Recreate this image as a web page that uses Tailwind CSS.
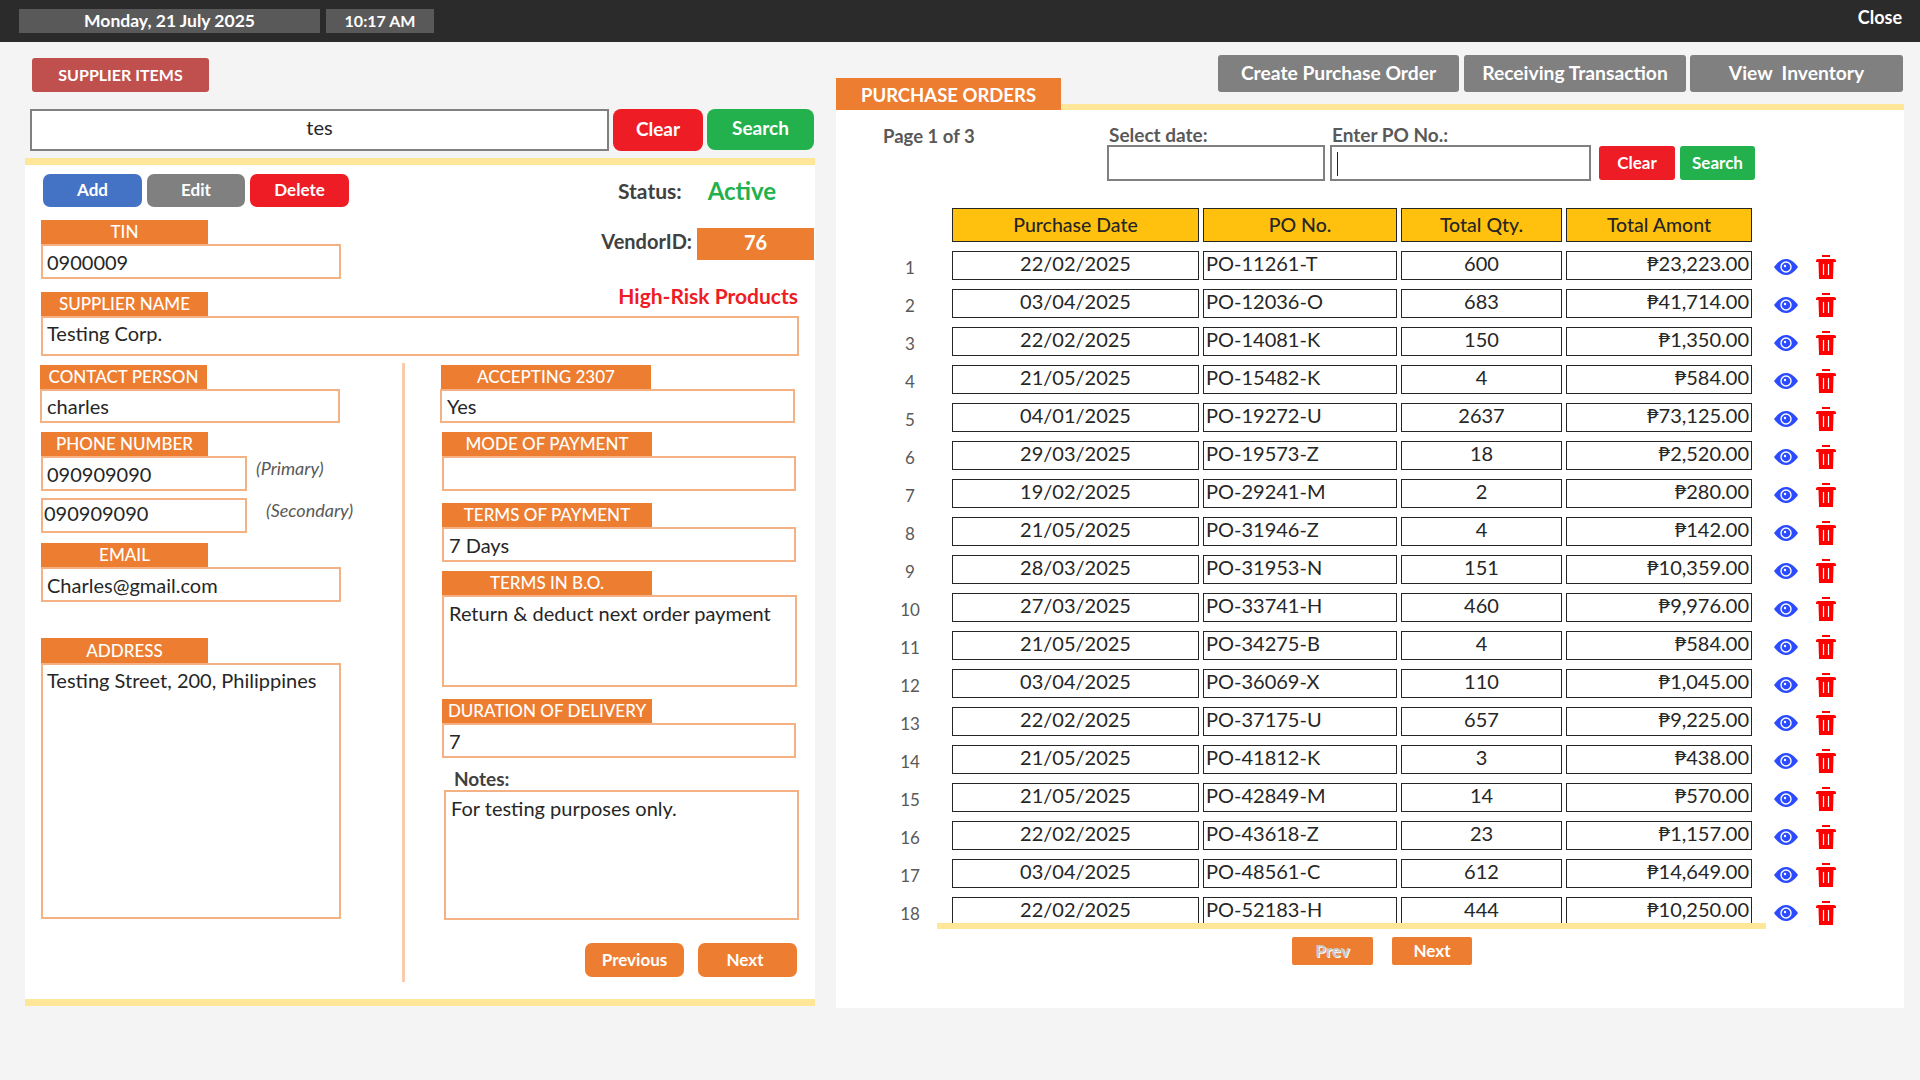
<!DOCTYPE html>
<html lang="en">
<head>
    <meta charset="UTF-8">
    <title>Supplier</title>
    <script src="https://cdn.jsdelivr.net/npm/@tailwindcss/browser@4"></script>
</head>
<body class="w-[1920px] h-[1080px] overflow-hidden bg-[#f4f4f4] font-['Lato',sans-serif] text-[#262626]">

    <!-- Top bar -->
    <div class="h-[42px] bg-[#2b2b2b] flex items-start pl-[19px] relative">
        <div class="mt-[9px] w-[301px] h-[24px] bg-[#595959] text-white text-center text-[17.5px] font-bold leading-[24px]">Monday, 21 July 2025</div>
        <div class="mt-[9px] ml-[6px] w-[108px] h-[24px] bg-[#595959] text-white text-center text-[16px] font-bold leading-[24px]">10:17 AM</div>
        <div class="ml-auto mr-[18px] mt-[6px] text-white text-[18px] font-bold leading-[22px]">Close</div>
    </div>

    <div class="flex items-start">
        <!-- Left side -->
        <div class="ml-[25px] w-[790px]">
            <button class="block mt-[16px] ml-[7px] w-[177px] h-[34px] rounded-[3px] bg-[#c0504d] text-white text-[16px] font-bold">SUPPLIER ITEMS</button>

            <div class="flex mt-[17px] ml-[5px] h-[42px]">
                <input value="tes" class="w-[579px] h-[42px] border-2 border-[#808080] bg-white text-center text-[20px] pb-[6px] outline-none">
                <button class="ml-[4px] w-[90px] h-[42px] rounded-[8px] bg-[#ee1c25] text-white text-[19px] font-bold pb-[2px]">Clear</button>
                <button class="ml-[4px] w-[107px] h-[41px] rounded-[8px] bg-[#22b14c] text-white text-[19px] font-bold pb-[2px]">Search</button>
            </div>

            <div class="mt-[7px] h-[848px] bg-white border-t-[7px] border-b-[7px] border-[#ffe699] pl-[16px]">
                <div class="flex items-start">
                    <div class="w-[310px]">
                        <div class="flex gap-[5px] mt-[9px] ml-[2px]">
                            <button class="w-[99px] h-[33px] rounded-[7px] bg-[#4472c4] text-white text-[17px] font-bold pb-[1px]">Add</button>
                            <button class="w-[98px] h-[33px] rounded-[7px] bg-[#808080] text-white text-[17px] font-bold pb-[1px]">Edit</button>
                            <button class="w-[99px] h-[33px] rounded-[7px] bg-[#ee1c25] text-white text-[17px] font-bold pb-[1px]">Delete</button>
                        </div>
                        <div class="mt-[13px] w-[167px] h-[24px] bg-[#ed7d31] text-white text-center text-[17px] font-medium leading-[24px]">TIN</div>
                        <input value="0900009" class="block w-[300px] h-[35px] border-2 border-[#f4b183] pl-[4px] pr-[5px] text-[20px] outline-none">
                    </div>
                    <div class="ml-[249px] w-[214px]">
                        <div class="flex items-center h-[32px] mt-[10px] pl-[18px]">
                            <span class="text-[21px] font-bold text-[#404040]">Status:</span>
                            <span class="ml-[26px] text-[24px] font-bold text-[#22b14c]">Active</span>
                        </div>
                        <div class="flex items-center mt-[19px]">
                            <span class="w-[97px] text-right pr-[5px] text-[20px] font-bold text-[#404040] whitespace-nowrap pb-[5px]">VendorID:</span>
                            <span class="w-[117px] h-[32px] bg-[#ed7d31] text-white text-center text-[20px] font-bold leading-[28px]">76</span>
                        </div>
                    </div>
                </div>

                <div class="flex items-start justify-between w-[757px] h-[24px] mt-[13px]">
                    <div class="w-[167px] h-[24px] bg-[#ed7d31] text-white text-center text-[17px] font-medium leading-[24px]">SUPPLIER NAME</div>
                    <div class="-mt-[8px] text-[21px] font-bold text-[#ee1c25] leading-[24px]">High-Risk Products</div>
                </div>
                <input value="Testing Corp." class="block w-[758px] h-[40px] border-2 border-[#f4b183] pl-[4px] pr-[5px] pb-[6px] text-[20px] outline-none">

                <div class="flex items-start mt-[7px]">
                    <!-- Left fields -->
                    <div class="w-[361px] pt-[2px]">
                        <div class="-ml-[1px] w-[167px] h-[24px] bg-[#ed7d31] text-white text-center text-[17px] font-medium leading-[24px]">CONTACT PERSON</div>
                        <input value="charles" class="block -ml-[1px] w-[300px] h-[34px] border-2 border-[#f4b183] px-[5px] text-[20px] outline-none">

                        <div class="mt-[9px] w-[167px] h-[24px] bg-[#ed7d31] text-white text-center text-[17px] font-medium leading-[24px]">PHONE NUMBER</div>
                        <div class="flex items-start">
                            <input value="090909090" class="block w-[206px] h-[35px] border-2 border-[#f4b183] pl-[4px] pr-[5px] text-[20px] outline-none">
                            <span class="ml-[9px] -mt-[1px] text-[18px] italic text-[#595959]">(Primary)</span>
                        </div>
                        <div class="flex items-start mt-[7px]">
                            <input value="090909090" class="block w-[206px] h-[35px] border-2 border-[#f4b183] pl-[1px] pb-[6px] text-[20px] outline-none">
                            <span class="ml-[19px] -mt-[1px] text-[18px] italic text-[#595959]">(Secondary)</span>
                        </div>

                        <div class="mt-[10px] w-[167px] h-[24px] bg-[#ed7d31] text-white text-center text-[17px] font-medium leading-[24px]">EMAIL</div>
                        <input value="Charles@gmail.com" class="block w-[300px] h-[35px] border-2 border-[#f4b183] pl-[4px] pr-[5px] text-[20px] outline-none">

                        <div class="mt-[36px] w-[167px] h-[25px] bg-[#ed7d31] text-white text-center text-[17px] font-medium leading-[25px]">ADDRESS</div>
                        <textarea class="block w-[300px] h-[256px] border-2 border-[#f4b183] pl-[4px] pr-[5px] text-[20px] outline-none resize-none">Testing Street, 200, Philippines</textarea>
                    </div>

                    <div class="w-[3px] h-[619px] bg-[#f8cbad]"></div>

                    <!-- Right fields -->
                    <div class="ml-[36px] w-[360px] pt-[2px]">
                        <div class="w-[210px] h-[24px] bg-[#ed7d31] text-white text-center text-[17px] font-medium leading-[24px]">ACCEPTING 2307</div>
                        <input value="Yes" class="block -ml-[1px] w-[355px] h-[34px] border-2 border-[#f4b183] px-[5px] text-[20px] outline-none">

                        <div class="mt-[9px] ml-[1px] w-[210px] h-[24px] bg-[#ed7d31] text-white text-center text-[17px] font-medium leading-[24px]">MODE OF PAYMENT</div>
                        <input class="block ml-[1px] w-[354px] h-[35px] border-2 border-[#f4b183] px-[5px] text-[20px] outline-none">

                        <div class="mt-[12px] ml-[1px] w-[210px] h-[24px] bg-[#ed7d31] text-white text-center text-[17px] font-medium leading-[24px]">TERMS OF PAYMENT</div>
                        <input value="7 Days" class="block ml-[1px] w-[354px] h-[35px] border-2 border-[#f4b183] px-[5px] text-[20px] outline-none">

                        <div class="mt-[9px] ml-[1px] w-[210px] h-[24px] bg-[#ed7d31] text-white text-center text-[17px] font-medium leading-[24px]">TERMS IN B.O.</div>
                        <textarea class="block ml-[1px] w-[355px] h-[92px] border-2 border-[#f4b183] px-[5px] pt-[1px] text-[20px] outline-none resize-none">Return &amp; deduct next order payment</textarea>

                        <div class="mt-[12px] ml-[1px] w-[210px] h-[24px] bg-[#ed7d31] text-white text-center text-[17px] font-medium leading-[24px]">DURATION OF DELIVERY</div>
                        <input value="7" class="block ml-[1px] w-[354px] h-[35px] border-2 border-[#f4b183] px-[5px] text-[20px] outline-none">

                        <div class="mt-[10px] ml-[13px] h-[22px] text-[19px] font-bold text-[#404040] leading-[22px]">Notes:</div>
                        <textarea class="block ml-[3px] w-[355px] h-[130px] border-2 border-[#f4b183] px-[5px] pt-[1px] text-[20px] outline-none resize-none">For testing purposes only.</textarea>

                        <div class="flex gap-[14px] mt-[23px] ml-[144px]">
                            <button class="w-[99px] h-[34px] rounded-[7px] bg-[#ed7d31] text-white text-[17px] font-bold">Previous</button>
                            <button class="w-[99px] h-[34px] rounded-[7px] bg-[#ed7d31] text-white text-[17px] font-bold pr-[5px]">Next</button>
                        </div>
                    </div>
                </div>
            </div>
        </div>

        <!-- Right side -->
        <div class="ml-[21px] w-[1068px]">
            <div class="flex justify-between items-start mt-[13px] h-[55px] pr-[1px] relative z-10">
                <div class="mt-[23px] w-[225px] h-[32px] bg-[#ed7d31] text-white text-center text-[18.500px] font-bold leading-[34px]">PURCHASE ORDERS</div>
                <div class="flex">
                    <button class="w-[241px] h-[37px] rounded-[3px] bg-[#808080] text-white text-[19.250px] font-bold pb-[1px]">Create Purchase Order</button>
                    <button class="ml-[5px] w-[222px] h-[37px] rounded-[3px] bg-[#808080] text-white text-[19.250px] font-bold pb-[1px]">Receiving Transaction</button>
                    <button class="ml-[4px] w-[213px] h-[37px] rounded-[3px] bg-[#808080] text-white text-[19.250px] font-bold whitespace-pre pb-[1px]">View  Inventory</button>
                </div>
            </div>

            <div class="-mt-[6px] h-[904px] bg-white border-t-[6px] border-[#ffe699]">
                <!-- Filters -->
                <div class="flex items-start pt-[15px]">
                    <div class="w-[271px] pl-[47px] text-[18.500px] font-bold text-[#595959] leading-[22px]">Page 1 of 3</div>
                    <div class="w-[223px]">
                        <div class="pl-[2px] h-[20px] text-[19px] font-bold text-[#595959] leading-[20px]">Select date:</div>
                        <div class="w-[218px] h-[36px] border-2 border-[#808080]"></div>
                    </div>
                    <div class="w-[269px]">
                        <div class="pl-[2px] h-[20px] text-[19px] font-bold text-[#595959] leading-[20px]">Enter PO No.:</div>
                        <div class="w-[261px] h-[36px] border-2 border-[#808080] pl-[5px] pt-[5px]"><div class="w-[1px] h-[24px] bg-[#262626]"></div></div>
                    </div>
                    <button class="mt-[21px] w-[76px] h-[34px] rounded-[3px] bg-[#ee1c25] text-white text-[17px] font-bold">Clear</button>
                    <button class="mt-[21px] ml-[5px] w-[75px] h-[34px] rounded-[3px] bg-[#22b14c] text-white text-[17px] font-bold">Search</button>
                </div>

                <!-- Orders table -->
                <div class="mt-[27px] h-[717px] overflow-hidden">
                    <div class="ml-[116px] grid grid-cols-[247px_194px_161px_186px] gap-x-[4px] h-[34px] mb-[9px] text-[19.500px] font-medium">
                        <div class="bg-[#ffc10e] border border-[#262626] text-center leading-[32px]">Purchase Date</div>
                        <div class="bg-[#ffc10e] border border-[#262626] text-center leading-[32px]">PO No.</div>
                        <div class="bg-[#ffc10e] border border-[#262626] text-center leading-[32px]">Total Qty.</div>
                        <div class="bg-[#ffc10e] border border-[#262626] text-center leading-[32px]">Total Amont</div>
                    </div>
                    <div id="rows"></div>
                </div>
                <div class="relative -mt-[2px] ml-[101px] w-[829px] h-[6px] bg-[#ffe699]"></div>

                <div class="flex mt-[8px] ml-[456px]">
                    <button class="w-[81px] h-[28px] rounded-[2px] bg-[#ed7d31] text-[#c8c8c8] text-[17px] font-bold [text-shadow:1px_1px_0_#ffffff]">Prev</button>
                    <button class="ml-[19px] w-[80px] h-[28px] rounded-[2px] bg-[#ed7d31] text-white text-[17px] font-bold">Next</button>
                </div>
            </div>
        </div>
    </div>

    <script>
        const orders = [
            ['22/02/2025', 'PO-11261-T', '600', '23,223.00'],
            ['03/04/2025', 'PO-12036-O', '683', '41,714.00'],
            ['22/02/2025', 'PO-14081-K', '150', '1,350.00'],
            ['21/05/2025', 'PO-15482-K', '4', '584.00'],
            ['04/01/2025', 'PO-19272-U', '2637', '73,125.00'],
            ['29/03/2025', 'PO-19573-Z', '18', '2,520.00'],
            ['19/02/2025', 'PO-29241-M', '2', '280.00'],
            ['21/05/2025', 'PO-31946-Z', '4', '142.00'],
            ['28/03/2025', 'PO-31953-N', '151', '10,359.00'],
            ['27/03/2025', 'PO-33741-H', '460', '9,976.00'],
            ['21/05/2025', 'PO-34275-B', '4', '584.00'],
            ['03/04/2025', 'PO-36069-X', '110', '1,045.00'],
            ['22/02/2025', 'PO-37175-U', '657', '9,225.00'],
            ['21/05/2025', 'PO-41812-K', '3', '438.00'],
            ['21/05/2025', 'PO-42849-M', '14', '570.00'],
            ['22/02/2025', 'PO-43618-Z', '23', '1,157.00'],
            ['03/04/2025', 'PO-48561-C', '612', '14,649.00'],
            ['22/02/2025', 'PO-52183-H', '444', '10,250.00']
        ];

        const eye = `<svg class="w-[24px] h-[16px]" viewBox="0 0 24 16">
            <path d="M0 8C4 2.500 8 0 12 0s8 2.500 12 8c-4 5.500-8 8-12 8S4 13.500 0 8z" fill="#2a4bff"/>
            <circle cx="12" cy="8" r="5.700" fill="#ffffff"/>
            <circle cx="12" cy="8" r="4.300" fill="#2a4bff"/>
            <circle cx="11" cy="7" r="1.200" fill="#ffffff"/>
        </svg>`;

        const trash = `<svg class="w-[20px] h-[24px]" viewBox="0 0 20 24">
            <rect x="6" y="0" width="8" height="2" fill="#ff0000"/>
            <path d="M0 7V5.500Q0 4 2 4h16q2 0 2 1.500V7z" fill="#ff0000"/>
            <path d="M2.500 7h15L17 24H3z" fill="#ff0000"/>
            <path d="M7.500 9v11M12.500 9v11" stroke="#ffffff" stroke-width="1.200"/>
        </svg>`;

        document.getElementById('rows').innerHTML = orders.map((o, i) => `
            <div class="flex items-start h-[29px] mb-[9px]">
                <div class="ml-[44px] w-[60px] text-center text-[17px] text-[#595959] pt-[5px] leading-[24px]">${i + 1}</div>
                <div class="ml-[12px] w-[247px] h-[29px] border border-[#262626] text-center text-[20px] leading-[23px]">${o[0]}</div>
                <div class="ml-[4px] w-[194px] h-[29px] border border-[#262626] pl-[2px] text-[20px] leading-[23px]">${o[1]}</div>
                <div class="ml-[4px] w-[161px] h-[29px] border border-[#262626] text-center text-[20px] leading-[23px]">${o[2]}</div>
                <div class="ml-[4px] w-[186px] h-[29px] border border-[#262626] text-right pr-[2px] text-[20px] leading-[23px]">₱${o[3]}</div>
                <div class="ml-[22px] mt-[8px]">${eye}</div>
                <div class="ml-[18px] mt-[4px]">${trash}</div>
            </div>`).join('');
    </script>
</body>
</html>
